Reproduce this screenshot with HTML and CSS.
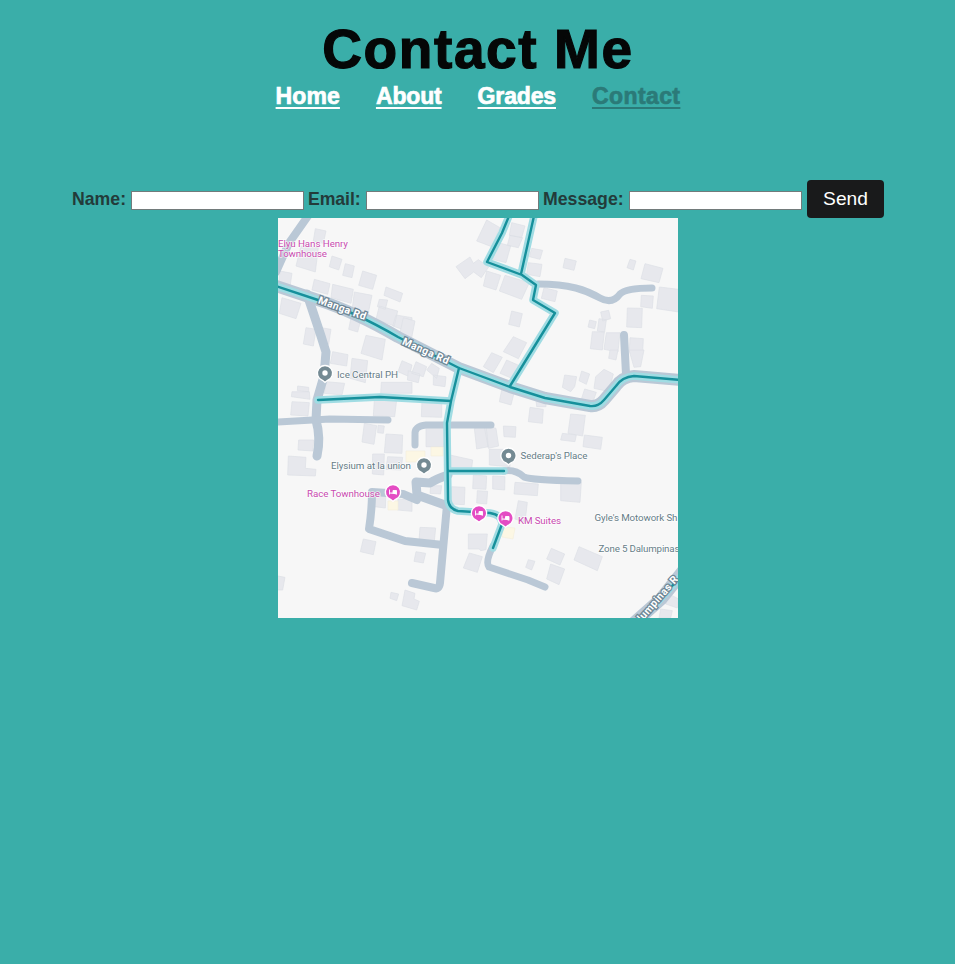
FILE: index.html
```
<!DOCTYPE html>
<html lang="en">
<head>
<meta charset="utf-8">
<title>Contact Me</title>
<link rel="stylesheet" href="styles.css">
</head>
<body>
<header>
<h1>Contact Me</h1>
<nav>
<a class="home" href="#">Home</a>
<a class="about" href="#">About</a>
<a class="grades" href="#">Grades</a>
<a class="current" href="#">Contact</a>
</nav>
</header>
<main>
<form>
<label class="name" for="name">Name:</label><input id="name" type="text">
<label class="email" for="email">Email:</label><input id="email" type="text">
<label class="message" for="message">Message:</label><input id="message" type="text">
<button type="button">Send</button>
</form>
<svg class="map" viewBox="278 218 400 400" width="400" height="400">
<rect x="278" y="218" width="400" height="400" fill="#f7f7f7"/>
<g class="buildings">
<path transform="translate(276 216) scale(.33333)" d="M118,38 150,45 142,82 112,75zM75,90 127,95 118,168 60,150zM168,120 198,130 188,162 160,152zM208,143 235,150 228,185 200,178zM260,165 302,178 290,220 248,208zM12,165 48,172 42,212 8,205zM115,190 162,203 155,235 108,222zM330,213 380,232 372,258 324,238zM170,205 232,220 225,262 165,245zM235,228 288,238 275,300 228,285zM310,250 335,252 328,280 304,272zM18,245 75,262 60,308 10,292zM90,335 120,340 112,390 82,384zM135,335 165,340 158,385 130,380zM310,270 365,285 355,330 300,310zM360,297 408,305 408,350 350,330zM270,358 328,370 318,432 255,412zM225,305 255,310 245,348 218,340z"/>
<path transform="translate(410 216) scale(.33333)" d="M230,12 270,35 245,92 200,75zM305,20 345,30 335,65 298,58zM300,58 338,65 325,95 292,88zM265,80 302,90 288,140 248,130zM365,97 398,103 390,130 358,122zM355,140 396,145 390,182 350,175zM138,152 180,123 190,142 205,131 236,153 214,185 191,168 165,188zM230,165 272,178 258,222 220,210zM285,178 358,200 335,250 268,225zM305,285 337,293 328,333 296,325zM310,362 350,380 325,428 280,407zM-20,305 15,315 5,365 -30,350z"/>
<path transform="translate(544 216) scale(.33333)" d="M63,127 97,135 90,163 57,155zM258,130 276,135 268,162 249,155zM303,143 357,157 345,200 291,188zM346,213 404,220 404,288 338,278zM292,238 328,240 325,277 290,272zM250,276 295,277 293,335 248,333zM170,288 194,283 200,308 176,315zM137,312 157,317 152,338 132,333zM165,308 187,311 182,348 160,345zM145,347 181,348 175,402 139,398zM187,350 228,350 222,408 180,400zM258,365 298,368 296,408 256,408zM0,215 40,225 33,257 -8,247z"/>
<path transform="translate(276 350) scale(.33333)" d="M170,5 216,14 212,48 163,40zM228,25 275,32 268,98 222,85zM378,32 408,45 400,80 366,65zM150,95 206,100 198,135 145,130zM316,97 408,97 408,130 314,130zM295,150 362,150 356,200 292,198zM48,125 100,125 102,148 46,140zM65,108 98,112 98,125 64,122zM48,155 100,158 96,198 44,195zM265,220 302,227 294,283 258,276zM306,226 325,228 322,250 305,248zM330,252 380,255 378,310 325,308zM68,270 113,270 111,303 66,300zM37,318 90,322 88,355 120,358 118,378 35,375zM290,312 325,312 323,375 289,372zM335,320 380,322 375,360 330,358z"/>
<path transform="translate(410 350) scale(.33333)" d="M245,8 277,22 250,68 220,50zM290,30 335,50 318,90 270,70zM-5,62 30,72 25,98 -8,90zM18,35 50,50 40,80 5,70zM50,60 65,40 88,55 80,85zM70,75 108,80 105,110 70,105zM36,150 95,150 95,202 34,200zM275,120 312,130 303,165 268,155zM360,172 400,178 397,220 355,215zM280,228 318,230 316,262 282,260zM48,222 102,222 102,290 48,290zM193,235 228,225 235,290 200,297zM222,225 258,235 266,288 235,295zM238,298 300,298 300,350 238,345zM120,315 188,330 185,355 120,355zM190,375 230,378 228,418 188,416zM248,378 285,380 284,420 248,417zM378,150 408,150 408,170 380,170z"/>
<path transform="translate(544 350) scale(.33333)" d="M62,75 98,80 92,110 80,125 55,112zM113,63 137,72 127,103 105,92zM180,58 208,72 195,125 150,115 155,80zM122,117 157,127 145,160 112,148zM80,192 124,196 116,258 72,250zM55,250 97,255 93,275 50,270zM121,255 175,262 170,298 117,290zM198,0 222,0 216,30 194,25zM255,0 300,0 290,50 270,52z"/>
<path transform="translate(276 484) scale(.33333)" d="M297,20 330,20 328,72 295,68zM366,45 408,47 408,82 364,78zM262,165 300,173 292,212 253,203zM0,275 27,280 20,318 0,318zM345,325 368,330 362,350 342,343z"/>
<path transform="translate(410 484) scale(.33333)" d="M62,5 95,5 92,30 60,28zM125,8 165,10 163,62 122,60zM202,20 233,22 230,60 200,57zM30,130 77,132 73,172 27,170zM18,203 47,208 40,237 12,232zM175,150 232,150 228,197 212,200 208,195 175,195zM178,207 217,218 202,265 160,252zM325,50 352,55 345,115 315,105zM355,227 375,232 365,258 347,250zM-15,318 15,328 12,345 28,352 20,378 -24,365zM315,-5 385,0 382,35 312,30z"/>
<path transform="translate(544 484) scale(.33333)" d="M50,-10 112,-5 108,55 50,50zM22,193 62,210 48,243 8,225zM20,240 62,255 45,302 8,285zM105,188 175,218 160,260 90,228zM375,330 404,345 400,372 365,360zM350,375 385,380 380,402 345,402z"/>
</g>
<path fill="#fcf7e4" stroke="#f3eedb" stroke-width=".6" d="M431,447h12v9h-12zM406,451h19v11h-19zM388,501h10v9h-10zM503,527l12,1-2,11-11-2z"/>
<g class="roads">
<path stroke-width="8" d="M308,216 289,243 276,272"/>
<path stroke-width="9" d="M307,294 321,336 326,352 324,376 317,400 316,420Q321,438 317,456"/>
<path stroke-width="7" d="M278,422 330,419 388,420"/>
<path stroke-width="7" d="M538,284C570,284 586,290 600,298Q612,305 620,294Q626,288 652,288"/>
<path stroke-width="8" d="M624,335 626,374"/>
<path stroke-width="7" d="M415,445V435Q414,426 426,425L491,425"/>
<path stroke-width="7" d="M504,471Q515,469 524,477Q531,480 578,481"/>
<path stroke-width="9" d="M448,475Q436,479 430,483L416,482L417,495L445,505"/>
<path stroke-width="8" d="M417,500 403,494 372,492Q372,510 369,529L405,541L443,545"/>
<path stroke-width="8" d="M447,505 440,583Q439,590 434,588L412,583"/>
<path stroke-width="7" d="M493,546Q485,562 489,567L528,580L545,587"/>
<path stroke-width="13" d="M635,622 661,599 685,569"/>
<path stroke-width="12" d="M276,286 318,300Q355,312 398,337L459,368L510,387L545,398L590,406Q598,407 604,400L616,386Q622,377 634,376L680,380"/>
</g>
<g class="route">
<path id="trail" d="M276,286 318,300Q355,312 398,337L459,368L510,387L545,398L590,406Q598,407 604,400L616,386Q622,377 634,376L680,380M509,216 502,233 487,262 522,275 536,285 533,300 555,313 510,386M534,216 521,274M459,368 451,401 447,423 448,500Q449,509 458,511L490,513Q502,515 502,524L493,548M318,400 380,397 451,401M449,471H504M652,608 683,574"/>
</g>
<use class="route-line" href="#trail"/>
<g class="pins">
<g fill="#748a93"><path id="pin" d="M322.500,380.300a7.600,7.600 0 1 1 5,0l-2.500,2z"/><use href="#pin" x="99" y="92"/><use href="#pin" x="183.500" y="82.500"/></g>
<g fill="#e44cc3"><path id="stay" d="M390.500,499.300a7.600,7.600 0 1 1 5,0l-2.500,2z"/><use href="#stay" x="86" y="21"/><use href="#stay" x="112.500" y="26"/></g>
</g>
<g fill="#fff"><circle cx="325" cy="373" r="2.700"/><circle cx="424" cy="465" r="2.700"/><circle cx="508.500" cy="455.500" r="2.700"/></g>
<g class="beds"><path d="M389.500,489.500v5m0-1.500h7v1.500m0-1.500v-2.500h-3.500v2.500M475.500,510.500v5m0-1.500h7v1.500m0-1.500v-2.500h-3.500v2.500M502,515.500v5m0-1.500h7v1.500m0-1.500v-2.500h-3.500v2.500"/></g>
<g class="places">
<text x="337" y="378" textLength="61">Ice Central PH</text>
<text x="331" y="468.500" textLength="80">Elysium at la union</text>
<text x="520.500" y="459" textLength="67">Sederap's Place</text>
<text x="594.500" y="520.500" textLength="83">Gyle's Motowork Sh</text>
<text x="598.500" y="552" textLength="81">Zone 5 Dalumpinas</text>
<g fill="#c94bb0"><text x="278" y="246.500" textLength="70">Elyu Hans Henry</text><text x="278" y="257" textLength="49">Townhouse</text><text x="307" y="496.500" textLength="73">Race Townhouse</text><text x="518" y="523.500" textLength="43">KM Suites</text></g>
</g>
<g class="streets">
<text transform="translate(317.500 303) rotate(20)" textLength="50">Manga Rd</text>
<text transform="translate(401.500 344) rotate(24)" textLength="50">Manga Rd</text>
<text transform="translate(642 622) rotate(-49)" textLength="56">lumpinas R</text>
</g>
</svg>
</main>
</body>
</html>
```
FILE: styles.css
```
body {
  margin: 0;
  min-height: 964px;
  background: #3aaea9;
  font-family: "Liberation Sans", sans-serif;
}

h1 {
  margin: 0;
  padding: 19px 0 0 1px;
  font-size: 55px;
  line-height: 61px;
  letter-spacing: 1.6px;
  word-spacing: -1px;
  text-align: center;
  color: #050707;
  -webkit-text-stroke: 1.2px;
}

nav {
  display: flex;
  justify-content: center;
  gap: 36px;
  padding-left: 1px;
  font-size: 23px;
  font-weight: bold;
  line-height: 32px;
  -webkit-text-stroke: 0.7px;
}

nav a {
  color: #fff;
  text-decoration-thickness: 2px;
  text-underline-offset: 3px;
}

.home { letter-spacing: 0.1px; }
.about { letter-spacing: -0.15px; }
.grades { letter-spacing: -0.15px; }

nav .current {
  color: #2b7a78;
  letter-spacing: 0.4px;
}

form {
  display: flex;
  align-items: center;
  height: 38px;
  margin: 68px 0 0 72px;
}

label {
  flex: none;
  padding-right: 5px;
  font-size: 17.7px;
  font-weight: bold;
  color: #233b3a;
}

.name { width: 54px; }
.email { width: 53px; letter-spacing: -0.1px; }
.message { width: 81px; }

input {
  box-sizing: border-box;
  flex: none;
  width: 173px;
  height: 19px;
  margin: 3px 4px 0 0;
  padding: 1px 2px;
  border: 1px solid #727b7b;
  background: #fff;
}

button {
  box-sizing: border-box;
  width: 77px;
  height: 38px;
  margin-left: 1px;
  padding: 0 0 1px;
  border: 0;
  border-radius: 4px;
  background: #191a1b;
  color: #fff;
  font: 19.2px "Liberation Sans", sans-serif;
}

.map {
  display: block;
  margin: 0 auto 0 278px;
}

.buildings {
  fill: #e7e8ed;
  stroke: #dddfe5;
  stroke-width: 2;
}

.roads,
.route,
.route-line {
  fill: none;
  stroke-linecap: round;
  stroke-linejoin: round;
}

.roads { stroke: #bac8d6; }

.route {
  stroke: #a0dce3;
  stroke-width: 7.5;
}

.route-line {
  stroke: #16909b;
  stroke-width: 2.4;
}

.pins {
  stroke: #fff;
  stroke-width: 1.3;
}

.beds {
  fill: #fff;
  stroke: #fff;
  stroke-width: 0.9;
}

.places {
  font: 9.8px Roboto, sans-serif;
  fill: #667d87;
}

.places text {
  paint-order: stroke;
  stroke: #fff;
  stroke-opacity: 0.7;
  stroke-width: 1.5px;
}

.streets {
  font: bold 10.5px Roboto, sans-serif;
  fill: #fff;
  stroke: #6f8796;
  stroke-width: 2.5px;
  paint-order: stroke;
}
```
